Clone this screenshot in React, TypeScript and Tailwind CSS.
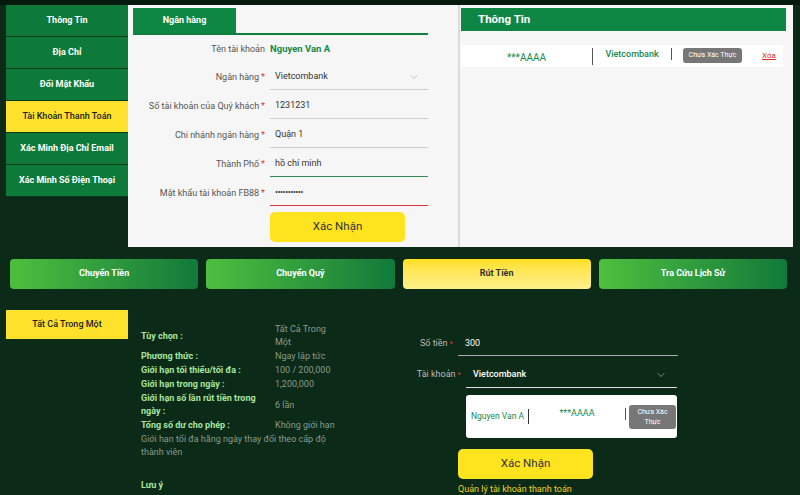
import { ChevronDown } from "lucide-react";

const sideItems = [
  "Thông Tin",
  "Địa Chỉ",
  "Đổi Mật Khẩu",
  "Tài Khoản Thanh Toán",
  "Xác Minh Địa Chỉ Email",
  "Xác Minh Số Điện Thoại",
];

const infoRows: [string, string[]][] = [
  ["Tùy chọn :", ["Tất Cả Trong", "Một"]],
  ["Phương thức :", ["Ngay lập tức"]],
  ["Giới hạn tối thiểu/tối đa :", ["100 / 200,000"]],
  ["Giới hạn trong ngày :", ["1,200,000"]],
  ["Giới hạn số lần rút tiền trong ngày :", ["6 lần"]],
  ["Tổng số dư cho phép :", ["Không giới hạn"]],
];

function Star() {
  return <span className="text-[#d9363e] ml-[2px]">*</span>;
}

function FormRow({ label, req, children, line }: { label: string; req?: boolean; children: React.ReactNode; line?: string }) {
  return (
    <div className="flex items-end h-[29px]">
      <div className="w-[137px] text-right text-[9px] text-[#555] pr-[5px] pb-[8px] leading-none">
        {label}
        {req && <Star />}
      </div>
      <div className={"flex-1 h-[26px] flex items-center px-[5px] text-[9px] text-[#333] border-b " + (line ?? "border-[#ccc]")}>
        {children}
      </div>
    </div>
  );
}

export default function App() {
  return (
    <div
      className="w-[800px] h-[495px] overflow-hidden bg-[#0b2a17] border-t-[5px] border-[#051a0c]"
      style={{ fontFamily: "Roboto, 'Noto Sans', sans-serif" }}
    >
      {/* top area */}
      <div className="flex">
        <div className="ml-[6px] w-[122px] self-start">
          {sideItems.map((t, i) => (
            <div
              key={t}
              className={
                "h-[32px] flex items-center justify-center text-[9px] border-b border-[#0a3a1c] " +
                (i === 3 ? "bg-[#fde12a] text-[#222] font-medium" : "bg-[#0d7a39] text-white font-bold")
              }
            >
              {t}
            </div>
          ))}
        </div>

        <div className="flex h-[242px] bg-[#f6f6f6]">
          {/* bank form */}
          <div className="w-[332px] pl-[5px] pr-[30px] pt-[3px] border-r-[2px] border-[#dcdcdc]">
            <div className="border-b-[2px] border-[#0e7f3d]">
              <div className="w-[103px] h-[25px] bg-[#0f8744] text-white text-[9px] font-bold flex items-center justify-center">
                Ngân hàng
              </div>
            </div>
            <div className="pt-[2px]">
              <div className="flex items-center h-[24px]">
                <div className="w-[137px] text-right text-[9px] text-[#555] pr-[5px] leading-none">Tên tài khoản</div>
                <div className="text-[9.5px] font-bold text-[#148a4c]">Nguyen Van A</div>
              </div>
              <FormRow label="Ngân hàng" req>
                <span className="flex-1">Vietcombank</span>
                <ChevronDown size={12} strokeWidth={1} className="text-[#888] mr-[3px]" />
              </FormRow>
              <FormRow label="Số tài khoản của Quý khách" req>1231231</FormRow>
              <FormRow label="Chi nhánh ngân hàng" req>Quận 1</FormRow>
              <FormRow label="Thành Phố" req line="border-[#2e8b57]">hồ chí minh</FormRow>
              <FormRow label="Mật khẩu tài khoản FB88" req line="border-[#d9363e]">
                <span className="text-[9px] tracking-[-0.5px]">•••••••••••</span>
              </FormRow>
              <div className="pl-[137px] pt-[6px]">
                <button className="w-[135px] h-[30px] rounded-[5px] bg-[#fde41f] text-[#333] text-[11.5px]">Xác Nhận</button>
              </div>
            </div>
          </div>

          {/* info panel */}
          <div className="w-[333px] pt-[3px] pr-[7px] pl-[1px]">
            <div className="h-[23px] bg-[#0f8744] text-white text-[11.5px] font-bold flex items-center pl-[17px]">Thông Tin</div>
            <div className="mt-[14px] mr-[3px] h-[22px] bg-white flex items-center text-[9px]">
              <div className="w-[131px] text-center text-[10px] text-[#148a4c] pt-[2px]">***AAAA</div>
              <div className="w-px h-[17px] bg-[#555]" />
              <div className="w-[78px] text-center font-medium text-[#148a4c] -mt-[3px]">Vietcombank</div>
              <div className="w-px h-[12px] bg-[#555] -mt-[4px]" />
              <div className="ml-[11px] w-[59px] h-[15px] rounded-[3px] bg-[#777] text-white text-[7px] flex items-center justify-center -mt-[2px]">
                Chưa Xác Thực
              </div>
              <div className="ml-[20px] text-[8px] text-[#e02a2a] underline">Xóa</div>
            </div>
          </div>
        </div>
      </div>

      {/* nav buttons */}
      <div className="ml-[10px] mt-[12px] w-[777px] grid grid-cols-4 gap-x-[8px]">
        {["Chuyển Tiền", "Chuyển Quỹ", "Rút Tiền", "Tra Cứu Lịch Sử"].map((t, i) => (
          <div
            key={t}
            className={
              "h-[30px] rounded-[4px] flex items-center justify-center text-[9px] font-bold " +
              (i === 2
                ? "bg-gradient-to-b from-[#ffe014] to-[#fff08a] text-[#333]"
                : "bg-gradient-to-r from-[#4cc03d] to-[#0f7a3a] text-white")
            }
          >
            {t}
          </div>
        ))}
      </div>

      {/* bottom */}
      <div className="flex mt-[21px]">
        <div className="ml-[6px] w-[122px] h-[29px] bg-[#fde12a] text-[#222] text-[9px] font-medium flex items-center justify-center self-start">
          Tất Cả Trong Một
        </div>

        <div className="ml-[13px] w-[200px] pt-[13px] text-[9px]">
          {infoRows.map(([l, v]) => (
            <div key={l} className="flex items-center leading-[13px] mb-[1px]">
              <div className="w-[134px] font-bold text-[#a8e6a0] pr-[8px]">{l}</div>
              <div className="flex-1 text-[#8a9c8d]">
                {v.map((x) => (
                  <div key={x}>{x}</div>
                ))}
              </div>
            </div>
          ))}
          <div className="text-[#8a9c8d] leading-[13px] w-[200px]">Giới hạn tối đa hằng ngày thay đổi theo cấp độ thành viên</div>
          <div className="mt-[20px] font-bold text-[#a8e6a0]">Lưu ý</div>
        </div>

        <div className="ml-[70px] pt-[22px] w-[270px]">
          <div className="flex items-end h-[24px]">
            <div className="w-[47px] text-right text-[9px] text-[#bbb] pr-[5px] pb-[8px] leading-none">
              Số tiền<span className="text-[#d9363e] ml-[2px] text-[8px]">*</span>
            </div>
            <div className="w-[220px] h-[24px] flex items-center pl-[7px] text-[9px] text-white border-b border-[#aaa]">300</div>
          </div>
          <div className="flex items-end h-[32px]">
            <div className="w-[55px] text-right text-[9px] text-[#bbb] pr-[5px] pb-[9px] leading-none">
              Tài khoản<span className="text-[#d9363e] ml-[2px] text-[8px]">*</span>
            </div>
            <div className="w-[211px] h-[26px] flex items-center pl-[7px] pr-[10px] text-[9px] text-white border-b border-[#ddd]">
              <span className="flex-1 font-medium">Vietcombank</span>
              <ChevronDown size={12} strokeWidth={1.2} className="text-[#ccc]" />
            </div>
          </div>
          <div className="ml-[55px] mt-[7px] w-[211px] h-[43px] rounded-[3px] bg-white flex items-center text-[9px]">
            <div className="pl-[5px] w-[62px] whitespace-nowrap text-[8.5px] text-[#148a4c]">Nguyen Van A</div>
            <div className="w-px h-[15px] bg-[#333]" />
            <div className="w-[96px] text-center text-[#148a4c] -mt-[5px]">***AAAA</div>
            <div className="w-px h-[12px] bg-[#555] -mt-[5px]" />
            <div className="ml-[3px] w-[47px] h-[24px] rounded-[3px] bg-[#777] text-white text-[7px] leading-[10px] flex flex-col items-center justify-center">
              <span>Chưa Xác</span>
              <span>Thực</span>
            </div>
          </div>
          <div className="ml-[47px]">
            <button className="mt-[11px] w-[135px] h-[30px] rounded-[5px] bg-[#fde41f] text-[#333] text-[11.5px]">Xác Nhận</button>
            <div className="mt-[6px] text-[9px] leading-none text-[#f2d31b]">Quản lý tài khoản thanh toán</div>
          </div>
        </div>
      </div>
    </div>
  );
}
